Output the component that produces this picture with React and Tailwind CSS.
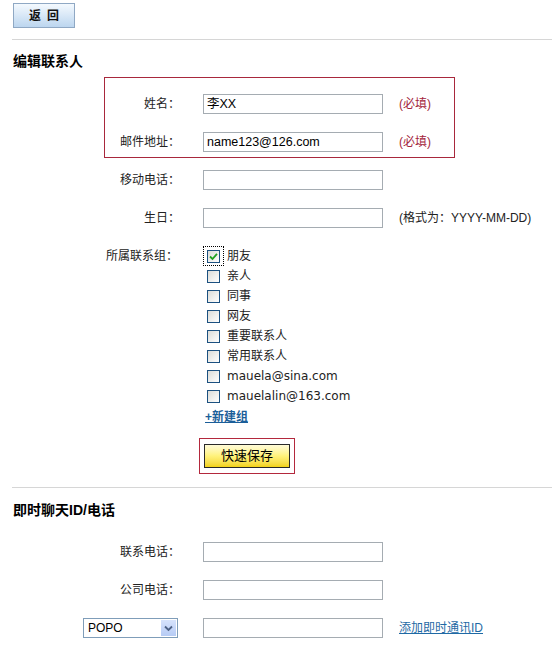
import React from "react";

const groups = [
  { name: "朋友", checked: true },
  { name: "亲人" },
  { name: "同事" },
  { name: "网友" },
  { name: "重要联系人" },
  { name: "常用联系人" },
  { name: "mauela@sina.com" },
  { name: "mauelalin@163.com" },
];

const TextBox = ({ value }) => (
  <div className="w-[180px] h-[20px] border border-[#a5acb2] bg-white px-[3px] flex items-center text-[12.5px] text-black">
    {value}
  </div>
);

const Row = ({ label, value, note, noteRed, inBox }) => (
  <div className="flex items-center h-[20px]">
    <div className={inBox ? "w-[75px] text-right" : "w-[180px] text-right"}>{label}</div>
    <div className="ml-[23px]">
      <TextBox value={value} />
    </div>
    {note && (
      <div className={noteRed ? "ml-[16px] text-[#a3243b]" : "ml-[16px] text-[#222]"}>{note}</div>
    )}
  </div>
);

const CheckBox = ({ checked }) => (
  <span className="w-[13px] h-[13px] border border-[#1c5180] bg-gradient-to-br from-[#dcdcd7] to-white flex items-center justify-center">
    {checked && (
      <svg width="9" height="9" viewBox="0 0 9 9">
        <path d="M1 4.5 L3.5 7 L8 1.8" stroke="#21a121" strokeWidth="1.8" fill="none" />
      </svg>
    )}
  </span>
);

export default function App() {
  return (
    <div
      className="w-[552px] h-[645px] bg-white text-[12px] text-[#222] overflow-hidden"
      style={{ fontFamily: '"Liberation Sans", "Noto Sans CJK SC", sans-serif' }}
    >
      {/* back button */}
      <div className="pt-[3px] pl-[13px]">
        <button className="w-[62px] h-[25px] border border-[#8fa8c4] bg-gradient-to-b from-[#f4f9fe] to-[#bcd6ef] font-bold text-[12px] text-[#111] tracking-[6px] pl-[6px]">
          返回
        </button>
      </div>

      <div className="mt-[11px] ml-[12px] border-t border-[#d6d6d6]" />

      <div className="mt-[11px] ml-[13px] h-[20px] flex items-center font-bold text-[14px] text-black">编辑联系人</div>

      {/* required fields */}
      <div className="mt-[6px] ml-[104px] w-[351px] border border-[#a8283c] pt-[16px] pb-[5px] flex flex-col gap-[18px]">
        <Row inBox label="姓名：" value="李XX" note="(必填)" noteRed />
        <Row inBox label="邮件地址：" value="name123@126.com" note="(必填)" noteRed />
      </div>

      <div className="mt-[12px] flex flex-col gap-[18px]">
        <Row label="移动电话：" />
        <Row label="生日：" note="(格式为：YYYY-MM-DD)" />
      </div>

      {/* groups */}
      <div className="mt-[18px] flex items-start">
        <div className="w-[178px] h-[20px] flex items-center justify-end">所属联系组：</div>
        <div className="ml-[25px] flex flex-col">
          {groups.map((g) => (
            <div key={g.name} className="h-[20px] flex items-center">
              <span
                className={
                  g.checked
                    ? "w-[21px] h-[20px] border border-dotted border-black flex items-center justify-center"
                    : "w-[21px] h-[20px] border border-transparent flex items-center justify-center"
                }
              >
                <CheckBox checked={g.checked} />
              </span>
              <span
                className="ml-[3px] text-[#222]"
                style={{ fontFamily: '"DejaVu Sans", "Noto Sans CJK SC", sans-serif' }}
              >
                {g.name}
              </span>
            </div>
          ))}
          <a href="#" className="h-[20px] mt-[1px] flex items-center ml-[2px] font-bold text-[#1b5e99] underline">
            +新建组
          </a>
        </div>
      </div>

      {/* save */}
      <div className="mt-[11px] ml-[199px] w-[96px] h-[36px] border border-[#b3283d] flex items-center justify-center">
        <button className="w-[86px] h-[24px] border border-[#2a2a2a] bg-gradient-to-b from-[#fffbd8] via-[#fff27a] to-[#f2d20e] text-[13px] text-black">
          快速保存
        </button>
      </div>

      <div className="mt-[13px] ml-[12px] border-t border-[#d6d6d6]" />

      <div className="mt-[12px] ml-[13px] h-[20px] flex items-center font-bold text-[14px] text-black">即时聊天ID/电话</div>

      <div className="mt-[22px] flex flex-col gap-[18px]">
        <Row label="联系电话：" />
        <Row label="公司电话：" />
        <div className="flex items-center h-[20px]">
          <div className="w-[178px] flex justify-end">
            <div className="w-[95px] h-[20px] border border-[#7f9db9] bg-white flex items-center justify-between pl-[4px] pr-[1px]">
              <span className="text-black">POPO</span>
              <span className="w-[15px] h-[16px] bg-gradient-to-b from-[#d6e2fb] to-[#b6cbf5] flex items-center justify-center">
                <svg width="9" height="7" viewBox="0 0 9 7">
                  <path d="M1 1.5 L4.5 5 L8 1.5" stroke="#4d6185" strokeWidth="1.8" fill="none" />
                </svg>
              </span>
            </div>
          </div>
          <div className="ml-[25px]">
            <TextBox />
          </div>
          <a href="#" className="ml-[16px] text-[#1f6aa5] underline">添加即时通讯ID</a>
        </div>
      </div>
    </div>
  );
}
